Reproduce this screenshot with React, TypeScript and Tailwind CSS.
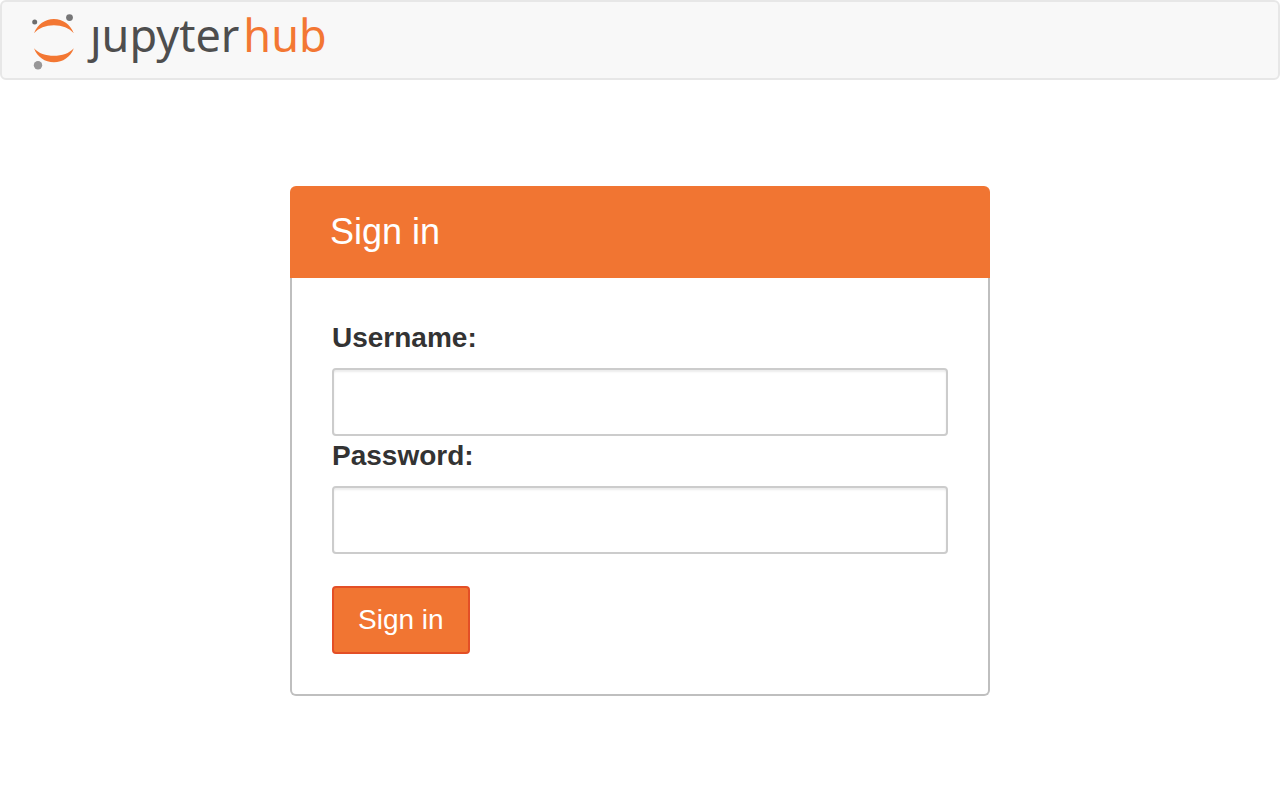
import React from "react";

function LogoMark() {
  return (
    <svg width="44" height="60" viewBox="0 -2 44 60" aria-hidden="true" className="shrink-0">
      <path d="M2 21.300C5.600 12.300 13 7 21.900 7C30.800 7 38.200 12.300 41.800 21.300C37.300 16 30 13.200 21.900 13.200C13.800 13.200 6.500 16 2 21.300Z" fill="#f37733" />
      <path d="M2 36.300C6.500 41.500 13.800 43.800 21.900 43.800C30 43.800 37.300 41.500 41.800 36.300C38.500 45.200 30.800 50.300 21.900 50.300C13 50.300 5.300 45.200 2 36.300Z" fill="#f37733" />
      <circle cx="2.700" cy="10" r="2.500" fill="#6d6d6d" />
      <circle cx="37.500" cy="5.600" r="3.400" fill="#767677" />
      <circle cx="6" cy="53.200" r="4.200" fill="#989798" />
    </svg>
  );
}

function Field({ id, label, type }: { id: string; label: string; type: string }) {
  return (
    <div className="flex flex-col gap-2.5">
      <label htmlFor={id} className="text-[28px] leading-10 font-bold">
        {label}
      </label>
      <input
        id={id}
        name={id}
        type={type}
        className="h-[68px] w-full rounded-sm border-2 border-[#ccc] bg-white px-6 text-[28px] shadow-[inset_0_2px_2px_rgba(0,0,0,0.075)] outline-none focus:border-[#f37524]"
      />
    </div>
  );
}

export default function App() {
  return (
    <div className="bg-white font-['Liberation_Sans',Arial,sans-serif] text-[#333]">
      <header className="flex h-20 items-center rounded-md border-2 border-[#e7e7e7] bg-[#f8f8f8] px-[30px]">
        <a href="#" aria-label="JupyterHub" className="flex items-center gap-3.5">
          <LogoMark />
          <span className="pb-2.5 font-['Noto_Sans',sans-serif] text-[45px] leading-[60px] text-[#4e4e4e]">
            ȷupyter<span className="ml-1 text-[#f37733]">hub</span>
          </span>
        </a>
      </header>
      <main className="px-6 pt-[106px] pb-[106px]">
        <form className="mx-auto w-full max-w-[700px]" onSubmit={(e) => e.preventDefault()}>
          <h1 className="rounded-t-md bg-[#f17532] px-10 py-[26px] text-[36px] leading-10 text-white">Sign in</h1>
          <div className="rounded-b-md border-2 border-t-0 border-[#bfbfbf] p-10">
            <Field id="username" label="Username:" type="text" />
            <Field id="password" label="Password:" type="password" />
            <button
              type="submit"
              className="mt-8 block h-[68px] rounded-sm border-2 border-[#e34f26] bg-[#f17532] px-6 text-[28px] leading-10 text-white"
            >
              Sign in
            </button>
          </div>
        </form>
      </main>
    </div>
  );
}
